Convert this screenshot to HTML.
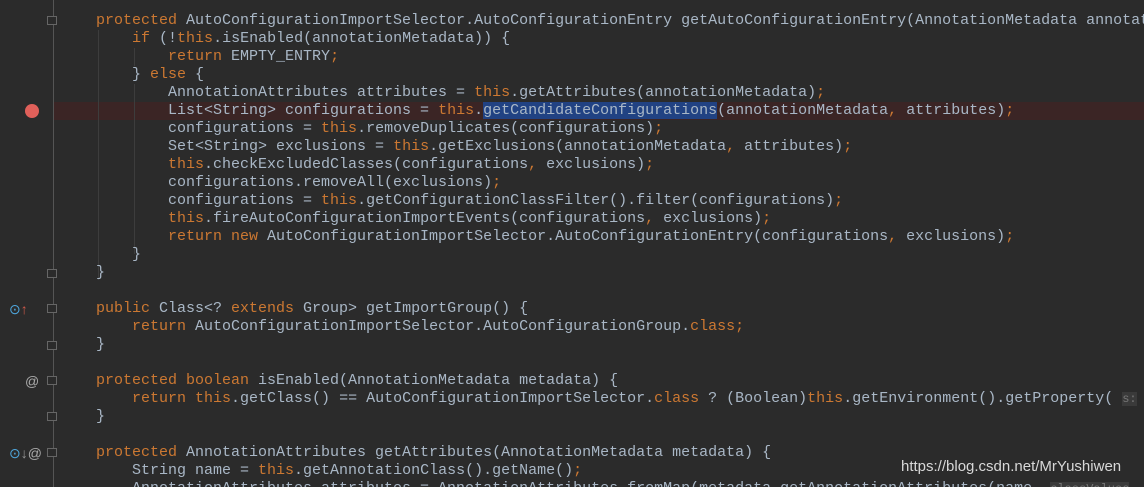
<!DOCTYPE html><html><head><style>
html,body{margin:0;width:1144px;height:487px;overflow:hidden}
body{background:#2b2b2b;position:relative;font-family:"Liberation Mono",monospace;}
.g{position:absolute;left:53px;top:0;width:1px;height:487px;background:#555;}
.hl{position:absolute;left:54px;top:102px;width:1090px;height:18px;background:#3b2525;}
.code{position:absolute;left:96px;top:12px;width:1048px;height:475px;overflow:hidden;font-size:15px;line-height:18px;color:#a9b7c6;white-space:pre;}
.k{color:#cc7832}
.sel{background:#214283}
.f{position:absolute;left:47px;width:10px;height:9px;border:1px solid #666;background:#2b2b2b;box-sizing:border-box}
.bp{position:absolute;left:25px;top:104px;width:14px;height:14px;border-radius:50%;background:#e0605a}
.at{position:absolute;color:#aaa;font-family:"Liberation Sans",sans-serif;font-size:14px}
.wm{position:absolute;left:901px;top:458px;color:#d8d8d8;font-family:"Liberation Sans",sans-serif;font-size:15px}
.hint{color:#777;background:#3a3a3a;font-size:12px}
.ig{position:absolute;width:1px;background:#3d3d3d}
</style></head><body>
<div class="hl"></div>
<div class="g"></div>
<div class="ig" style="left:98px;top:30px;height:250px"></div>
<div class="ig" style="left:134px;top:48px;height:18px"></div>
<div class="ig" style="left:134px;top:84px;height:170px"></div>
<div class="f" style="top:16px"></div>
<div class="f" style="top:269px"></div>
<div class="f" style="top:304px"></div>
<div class="f" style="top:341px"></div>
<div class="f" style="top:376px"></div>
<div class="f" style="top:412px"></div>
<div class="f" style="top:448px"></div>
<div class="bp"></div>
<div class="at" style="left:9px;top:301px;color:#4ea6dc">⊙<span style="color:#d05a4a">↑</span></div>
<div class="at" style="left:25px;top:373px">@</div>
<div class="at" style="left:9px;top:445px"><span style="color:#4ea6dc">⊙</span><span style="color:#999">↓</span>@</div>
<div class="code"><span class="k">protected</span> AutoConfigurationImportSelector.AutoConfigurationEntry getAutoConfigurationEntry(AnnotationMetadata annotat
    <span class="k">if</span> (!<span class="k">this</span>.isEnabled(annotationMetadata)) {
        <span class="k">return</span> EMPTY_ENTRY<span class="k">;</span>
    } <span class="k">else</span> {
        AnnotationAttributes attributes = <span class="k">this</span>.getAttributes(annotationMetadata)<span class="k">;</span>
        List&lt;String&gt; configurations = <span class="k">this</span>.<span class="sel">getCandidateConfigurations</span>(annotationMetadata<span class="k">,</span> attributes)<span class="k">;</span>
        configurations = <span class="k">this</span>.removeDuplicates(configurations)<span class="k">;</span>
        Set&lt;String&gt; exclusions = <span class="k">this</span>.getExclusions(annotationMetadata<span class="k">,</span> attributes)<span class="k">;</span>
        <span class="k">this</span>.checkExcludedClasses(configurations<span class="k">,</span> exclusions)<span class="k">;</span>
        configurations.removeAll(exclusions)<span class="k">;</span>
        configurations = <span class="k">this</span>.getConfigurationClassFilter().filter(configurations)<span class="k">;</span>
        <span class="k">this</span>.fireAutoConfigurationImportEvents(configurations<span class="k">,</span> exclusions)<span class="k">;</span>
        <span class="k">return new</span> AutoConfigurationImportSelector.AutoConfigurationEntry(configurations<span class="k">,</span> exclusions)<span class="k">;</span>
    }
}

<span class="k">public</span> Class&lt;? <span class="k">extends</span> Group&gt; getImportGroup() {
    <span class="k">return</span> AutoConfigurationImportSelector.AutoConfigurationGroup.<span class="k">class;</span>
}

<span class="k">protected boolean</span> isEnabled(AnnotationMetadata metadata) {
    <span class="k">return this</span>.getClass() == AutoConfigurationImportSelector.<span class="k">class</span> ? (Boolean)<span class="k">this</span>.getEnvironment().getProperty( <span class="hint">s:</span>
}

<span class="k">protected</span> AnnotationAttributes getAttributes(AnnotationMetadata metadata) {
    String name = <span class="k">this</span>.getAnnotationClass().getName()<span class="k">;</span>
    AnnotationAttributes attributes = AnnotationAttributes.fromMap(metadata.getAnnotationAttributes(name<span class="k">,</span> <span class="hint">classValues</span>
</div>
<div class="wm">https://blog.csdn.net/MrYushiwen</div>
</body></html>
